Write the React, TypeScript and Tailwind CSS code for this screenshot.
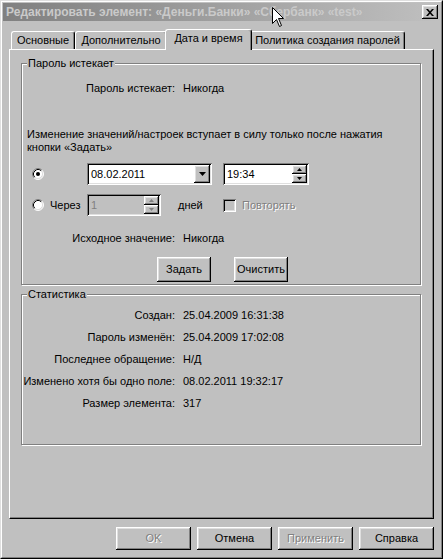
import React from "react";

// win98-ish bevels
const raised =
  "shadow-[inset_-1px_-1px_0_#000,inset_1px_1px_0_#fff,inset_-2px_-2px_0_#808080,inset_2px_2px_0_#dfdfdf]";
const sunken =
  "shadow-[inset_1px_1px_0_#808080,inset_-1px_-1px_0_#fff,inset_2px_2px_0_#000,inset_-2px_-2px_0_#dfdfdf]";
const disabledText = "text-[#808080] [text-shadow:1px_1px_0_#fff]";

const stats: [string, string][] = [
  ["Создан:", "25.04.2009 16:31:38"],
  ["Пароль изменён:", "25.04.2009 17:02:08"],
  ["Последнее обращение:", "Н/Д"],
  ["Изменено хотя бы одно поле:", "08.02.2011 19:32:17"],
  ["Размер элемента:", "317"],
];

function Radio({ checked }: { checked?: boolean }) {
  return (
    <svg width="12" height="12" viewBox="0 0 12 12" className="shrink-0">
      <circle cx="6" cy="6" r="5" fill="#fff" />
      <path d="M2.11 9.89 A5.5 5.5 0 0 1 9.89 2.11" stroke="#808080" fill="none" />
      <path d="M9.89 2.11 A5.5 5.5 0 0 1 2.11 9.89" stroke="#fff" fill="none" />
      <path d="M2.82 9.18 A4.5 4.5 0 0 1 9.18 2.82" stroke="#000" fill="none" />
      <path d="M9.18 2.82 A4.5 4.5 0 0 1 2.82 9.18" stroke="#dfdfdf" fill="none" />
      {checked && <circle cx="6" cy="6" r="2" fill="#000" />}
    </svg>
  );
}

function Arrow({ up, color = "#000", size = "small" }: { up?: boolean; color?: string; size?: "small" | "big" }) {
  if (size === "big") {
    return (
      <svg width="7" height="4" viewBox="0 0 7 4">
        <polygon points="0,0 7,0 3.5,4" fill={color} />
      </svg>
    );
  }
  return (
    <svg width="5" height="3" viewBox="0 0 5 3">
      <polygon points={up ? "0,3 5,3 2.5,0" : "0,0 5,0 2.5,3"} fill={color} />
    </svg>
  );
}

function Spin({ disabled }: { disabled?: boolean }) {
  const c = disabled ? "#808080" : "#000";
  return (
    <div className="flex flex-col w-[15px] mr-[2px]">
      <div className={`h-[9px] flex items-center justify-center bg-[#c0c0c0] ${raised}`}>
        <Arrow up color={c} />
      </div>
      <div className={`h-[9px] flex items-center justify-center bg-[#c0c0c0] ${raised}`}>
        <Arrow color={c} />
      </div>
    </div>
  );
}

function GroupBox({ title, className, children }: { title: string; className: string; children: React.ReactNode }) {
  return (
    <div
      className={`relative border border-[#808080] shadow-[1px_1px_0_#fff,inset_1px_1px_0_#fff] ${className}`}
    >
      <span className="absolute left-[5px] -top-[7px] px-[1px] bg-[#c0c0c0] leading-[13px]">{title}</span>
      {children}
    </div>
  );
}

function Tab({ label, className, active }: { label: string; className: string; active?: boolean }) {
  return (
    <div
      className={`flex items-center justify-center bg-[#c0c0c0] border-t border-l border-white border-r border-r-black shadow-[inset_-1px_0_0_#808080] rounded-t-[3px] ${
        active ? "h-[21px] -mb-[1px] -mx-[2px] z-10 pb-[3px]" : "h-[18px]"
      } ${className}`}
    >
      {label}
    </div>
  );
}

function Button({ label, className, disabled }: { label: string; className: string; disabled?: boolean }) {
  return (
    <div className={`flex items-center justify-center bg-[#c0c0c0] ${raised} ${disabled ? disabledText : ""} ${className}`}>
      {label}
    </div>
  );
}

export default function App() {
  return (
    <div className="relative w-[443px] h-[559px] overflow-hidden bg-[#c0c0c0] font-['Liberation_Sans',Arial,sans-serif] text-[11px] leading-[13px] text-black border border-t-[#dfdfdf] border-l-[#dfdfdf] border-r-black border-b-black">
      <div className="h-full flex flex-col p-[1px] border border-t-white border-l-white border-r-[#808080] border-b-[#808080]">
        {/* Title bar */}
        <div className="h-[18px] flex items-center bg-linear-to-r from-[#808080] to-[#c0c0c0]">
          <span className="flex-1 pl-[3px] text-[12px] font-bold text-[#cacaca] whitespace-nowrap">
            Редактировать элемент: «Деньги.Банки» «Сбербанк» «test»
          </span>
          <div className={`w-[16px] h-[14px] mr-[2px] flex items-center justify-center bg-[#c0c0c0] ${raised}`}>
            <svg width="8" height="7" viewBox="0 0 8 7">
              <path d="M0 0h2l2 2.2L6 0h2L5 3.5 8 7H6L4 4.8 2 7H0l3-3.5z" fill="#000" />
            </svg>
          </div>
        </div>

        <div className="flex flex-col px-[6px]">
          {/* Tabs */}
          <div className="mt-[8px] h-[20px] flex items-end pl-[2px]">
            <Tab label="Основные" className="w-[64px]" />
            <Tab label="Дополнительно" className="w-[92px]" />
            <Tab label="Дата и время" className="w-[87px]" active />
            <Tab label="Политика создания паролей" className="w-[155px]" />
          </div>

          {/* Tab panel */}
          <div className="h-[470px] flex flex-col pt-[13px] pl-[11px] pr-[12px] border-l border-t border-white border-r border-b border-r-black border-b-black shadow-[inset_-1px_-1px_0_#808080]">
            <GroupBox title="Пароль истекает" className="h-[222px] flex flex-col">
              <div className="mt-[18px] grid grid-cols-[153px_1fr] gap-x-[8px]">
                <span className="text-right">Пароль истекает:</span>
                <span>Никогда</span>
              </div>

              <p className="mt-[33px] pl-[5px] leading-[13px]">
                Изменение значений/настроек вступает в силу только после нажатия
                <br />
                кнопки «Задать»
              </p>

              <div className="mt-[9px] h-[22px] flex items-center">
                <div className="w-[65px] pl-[10px] flex items-center">
                  <Radio checked />
                </div>
                <div className={`w-[125px] h-[22px] flex items-center bg-white ${sunken}`}>
                  <span className="flex-1 pl-[4px]">08.02.2011</span>
                  <div className={`w-[16px] h-[18px] mr-[2px] flex items-center justify-center bg-[#c0c0c0] ${raised}`}>
                    <Arrow size="big" />
                  </div>
                </div>
                <div className={`ml-[11px] w-[86px] h-[22px] flex items-center bg-white ${sunken}`}>
                  <span className="flex-1 pl-[4px]">19:34</span>
                  <Spin />
                </div>
              </div>

              <div className="mt-[9px] h-[22px] flex items-center">
                <div className="w-[65px] pl-[10px] flex items-center gap-[6px]">
                  <Radio />
                  <span>Через</span>
                </div>
                <div className={`w-[74px] h-[22px] flex items-center bg-[#c0c0c0] ${sunken}`}>
                  <span className="flex-1 pl-[4px] text-[#808080]">1</span>
                  <Spin disabled />
                </div>
                <div className="w-[62px] pl-[17px]">дней</div>
                <div className={`w-[13px] h-[13px] bg-[#c0c0c0] ${sunken}`} />
                <span className={`ml-[6px] ${disabledText}`}>Повторять</span>
              </div>

              <div className="mt-[16px] grid grid-cols-[153px_1fr] gap-x-[8px]">
                <span className="text-right">Исходное значение:</span>
                <span>Никогда</span>
              </div>

              <div className="mt-[12px] flex pl-[135px] gap-[23px]">
                <Button label="Задать" className="w-[54px] h-[25px]" />
                <Button label="Очистить" className="w-[54px] h-[25px]" />
              </div>
            </GroupBox>

            <GroupBox title="Статистика" className="mt-[9px] h-[151px]">
              <div className="pt-[9px] grid grid-cols-[153px_1fr] gap-x-[8px] auto-rows-[22px] leading-[22px]">
                {stats.map(([k, v]) => (
                  <React.Fragment key={k}>
                    <span className="text-right whitespace-nowrap">{k}</span>
                    <span>{v}</span>
                  </React.Fragment>
                ))}
              </div>
            </GroupBox>
          </div>

          {/* Dialog buttons */}
          <div className="mt-[8px] flex justify-end gap-[6px]">
            <Button label="OK" className="w-[75px] h-[23px]" disabled />
            <Button label="Отмена" className="w-[75px] h-[23px]" />
            <Button label="Применить" className="w-[75px] h-[23px]" disabled />
            <Button label="Справка" className="w-[75px] h-[23px]" />
          </div>
        </div>
      </div>

      {/* mouse pointer */}
      <svg className="absolute left-[271px] top-[6px]" width="13" height="21" viewBox="0 0 13 21">
        <path d="M0.5 0.5V16.5L4.5 12.5L7.5 19.5L9.5 18.5L6.5 11.5H11.5Z" fill="#fff" stroke="#000" />
      </svg>
    </div>
  );
}
